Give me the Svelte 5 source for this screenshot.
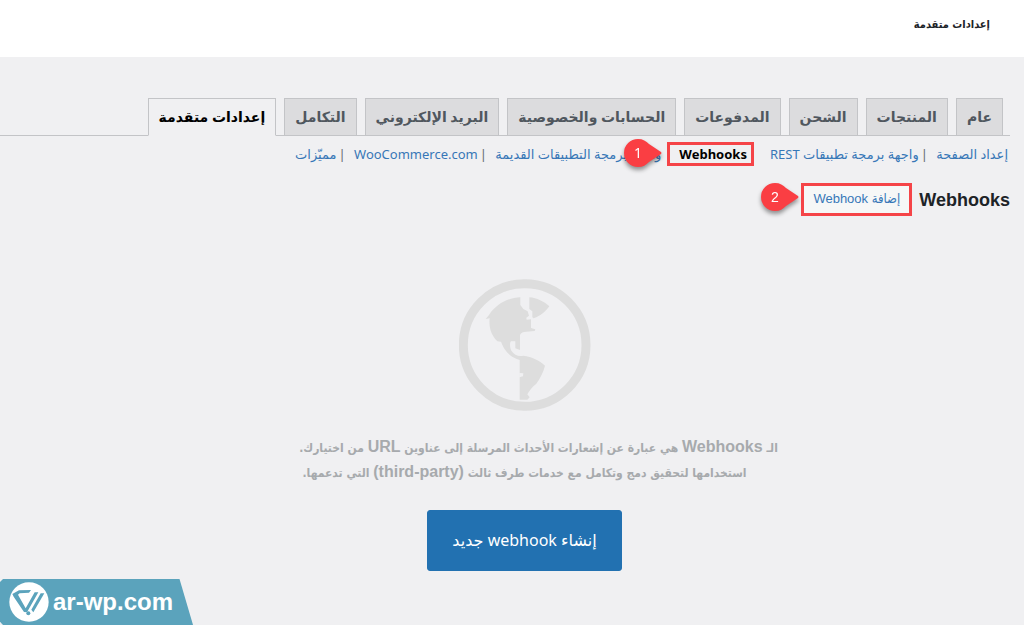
<script>
	const tabs = [
		{ slug: 'general', label: 'عام' },
		{ slug: 'products', label: 'المنتجات' },
		{ slug: 'shipping', label: 'الشحن' },
		{ slug: 'checkout', label: 'المدفوعات' },
		{ slug: 'account', label: 'الحسابات والخصوصية' },
		{ slug: 'email', label: 'البريد الإلكتروني' },
		{ slug: 'integration', label: 'التكامل' },
		{ slug: 'advanced', label: 'إعدادات متقدمة' }
	];

	const sections = [
		{ slug: 'page', label: 'إعداد الصفحة' },
		{ slug: 'keys', label: 'واجهة برمجة تطبيقات REST' },
		{ slug: 'webhooks', label: 'Webhooks' },
		{ slug: 'legacy', label: 'واجهة برمجة التطبيقات القديمة' },
		{ slug: 'com', label: 'WooCommerce.com' },
		{ slug: 'features', label: 'مميّزات' }
	];

	let activeTab = $state('advanced');
	let activeSection = $state('webhooks');

	function selectTab(e, slug) {
		e.preventDefault();
		activeTab = slug;
	}

	function selectSection(e, slug) {
		e.preventDefault();
		activeSection = slug;
	}
</script>

{#snippet pin(number)}
	<svg class="pin" viewBox="0 0 40 32" width="40" height="32" aria-hidden="true">
		<path d="M15 1 C20 1 23 3 26 6 L38 14 Q39 15 38 16 L26 24 C23 27 20 29 15 29 A14 14 0 0 1 15 1 Z" fill="#fa3e43" />
		<text x="15" y="20" text-anchor="middle" font-size="14" fill="#fff">{number}</text>
	</svg>
{/snippet}

<div class="page" dir="rtl" lang="ar">
	<header class="page-header">
		<h1>إعدادات متقدمة</h1>
	</header>

	<main>
		<nav class="tabs">
			{#each tabs as tab (tab.slug)}
				<a
					href="#{tab.slug}"
					class="tab"
					class:tab-active={activeTab === tab.slug}
					onclick={(e) => selectTab(e, tab.slug)}>{tab.label}</a>
			{/each}
		</nav>

		<ul class="sections">
			{#each sections as section (section.slug)}
				<li class:marked={section.slug === 'webhooks'}>
					<a
						href="#{section.slug}"
						class:current={activeSection === section.slug}
						onclick={(e) => selectSection(e, section.slug)}>{section.label}</a>
					{#if section.slug === 'webhooks'}{@render pin(1)}{/if}
				</li>
			{/each}
		</ul>

		<div class="title-row">
			<h2>Webhooks</h2>
			<div class="title-action">
				<a href="#new">إضافة Webhook</a>
				{@render pin(2)}
			</div>
		</div>

		<section class="blank-state">
			<svg class="globe" viewBox="57 42 396 396" width="132" height="132" aria-hidden="true">
				<circle cx="254" cy="240" r="184" fill="none" stroke="#dddddd" stroke-width="27" />
				<g fill="#dddddd">
					<path d="M241 97 C205 98 168 117 147 150 L137 162 L149 160 C146 185 153 211 172 229 L183 230 C190 250 207 278 239 285 V404 H262 L269 397 L262 388 C268 377 276 366 289 356 C300 340 310 322 315 302 C298 286 276 275 250 272 C235 275 223 270 214 257 C209 247 209 232 213 229 L226 229 V250 L240 255 V210 C243 203 250 200 259 200 L284 198 L286 193 L273 189 V163 L260 164 L259 158 L267 152 L263 139 L250 132 L241 120 Z" />
					<path d="M268 97 C291 99 312 109 328 124 C316 140 303 152 281 160 L277 157 V139 L268 132 Z" />
				</g>
				<path d="M238 324 L250 325 L249 334 L238 337 Z" fill="#f0f0f2" />
			</svg>
			<p>
				<span class="lead">الـ <span class="latin">Webhooks</span> هي عبارة عن إشعارات الأحداث المرسلة إلى عناوين <span class="latin">URL</span> من اختيارك.</span><br />
				استخدامها لتحقيق دمج وتكامل مع خدمات طرف ثالث <span class="latin">(third-party)</span> التي تدعمها.
			</p>
			<button type="button">إنشاء webhook جديد</button>
		</section>
	</main>

	<a class="brand" href="#home" dir="ltr">
		<svg viewBox="0 0 120 120" width="40" height="40" aria-hidden="true">
			<circle cx="60" cy="60" r="59" fill="#fff" />
			<g fill="#5ba3bc">
				<path d="M10 36 L30 25 L66 24 L60 32 L32 34 L27 38 L50 79 L77 31 H88 L54 91 L45 90 L14 44 Z" />
				<path d="M95 34 H106 L73 91 L67 83 Z" />
				<circle cx="58" cy="94" r="6" />
			</g>
		</svg>
		<span>ar-wp.com</span>
	</a>
</div>

<style>
	:global(body) {
		margin: 0;
		background: #f0f0f2;
	}
	.page {
		position: relative;
		min-height: 100vh;
		background: #f0f0f2;
		font-family: 'Noto Sans', 'DejaVu Sans', sans-serif;
		font-size: 13px;
		color: #1d2327;
	}
	.page-header {
		display: flex;
		align-items: center;
		height: 57px;
		padding: 0 34px;
		background: #fff;
	}
	h1 {
		margin: 0 0 8px;
		font-family: 'DejaVu Sans Condensed', 'DejaVu Sans', sans-serif;
		font-size: 11px;
		font-weight: 700;
		line-height: 16px;
	}
	a {
		color: #3777b7;
		text-decoration: none;
	}
	.tabs {
		display: flex;
		gap: 8px;
		margin: 41px 14px 0 0;
		padding: 0 7px;
		border-bottom: 1px solid #c3c4c7;
	}
	.tab {
		padding: 6px 10px;
		margin-bottom: -1px;
		border: 1px solid #c3c4c7;
		background: #dcdcde;
		color: #50575e;
		font-size: 14px;
		font-weight: 700;
		line-height: 24px;
		white-space: nowrap;
	}
	.tab-active {
		border-bottom-color: #f0f0f2;
		background: #f0f0f2;
		color: #000;
	}
	.sections {
		display: flex;
		margin: 0;
		padding: 6px 16px 0;
		list-style: none;
		line-height: 24px;
		white-space: nowrap;
	}
	.sections li {
		position: relative;
	}
	.sections li:not(:last-child, .marked, :nth-child(2))::after {
		content: '|';
		margin-inline: 5px 2px;
		color: #646970;
	}
	.sections .marked {
		z-index: 1;
		margin-inline: 16px 6px;
		padding-inline: 7px 12px;
		outline: 3px solid #f54448;
		outline-offset: -3px;
	}
	.sections .current {
		color: #000;
		font-weight: 700;
	}
	.pin {
		position: absolute;
		top: -4px;
		right: 100%;
		margin-right: 4px;
		filter: drop-shadow(0 3px 2px rgba(0, 0, 0, 0.4));
	}
	.title-row {
		display: flex;
		align-items: center;
		gap: 7px;
		margin-top: 17px;
		padding: 0 14px;
	}
	h2 {
		margin: 0;
		font-family: 'Liberation Sans', sans-serif;
		font-size: 18px;
		line-height: 24px;
	}
	.title-action {
		position: relative;
		padding: 0 9px 2px;
		border: 3px solid #f54448;
		background: #f6f7f7;
		font-family: 'Liberation Sans', 'DejaVu Sans Condensed', sans-serif;
		line-height: 25px;
	}
	.blank-state {
		display: flex;
		flex-direction: column;
		align-items: center;
		padding: 63px 0 50px 25px;
		text-align: center;
	}
	.blank-state p {
		margin: 25px 0 24px;
		color: #a7aaad;
		font-family: 'DejaVu Sans Condensed', 'DejaVu Sans', sans-serif;
		font-size: 12px;
		font-weight: 700;
		line-height: 25px;
	}
	.lead {
		padding-inline-end: 28px;
	}
	.latin {
		font-family: 'Liberation Sans', sans-serif;
		font-size: 16px;
		line-height: 16px;
	}
	.blank-state button {
		padding: 18px 24px;
		border: 1px solid #2271b1;
		border-radius: 3px;
		background: #2271b1;
		color: #fff;
		font-family: inherit;
		font-size: 16px;
		line-height: 23px;
	}
	.brand {
		position: absolute;
		bottom: 0;
		left: 0;
		display: flex;
		align-items: center;
		gap: 4px;
		padding: 3px 20px 3px 9px;
		background: #5ba3bc;
		clip-path: polygon(0 3px, 3px 0, 93% 0, 100% 100%, 3px 100%, 0 93%);
		color: #fff;
		font-family: 'Liberation Sans', sans-serif;
		font-size: 24px;
		font-weight: 700;
	}
</style>
